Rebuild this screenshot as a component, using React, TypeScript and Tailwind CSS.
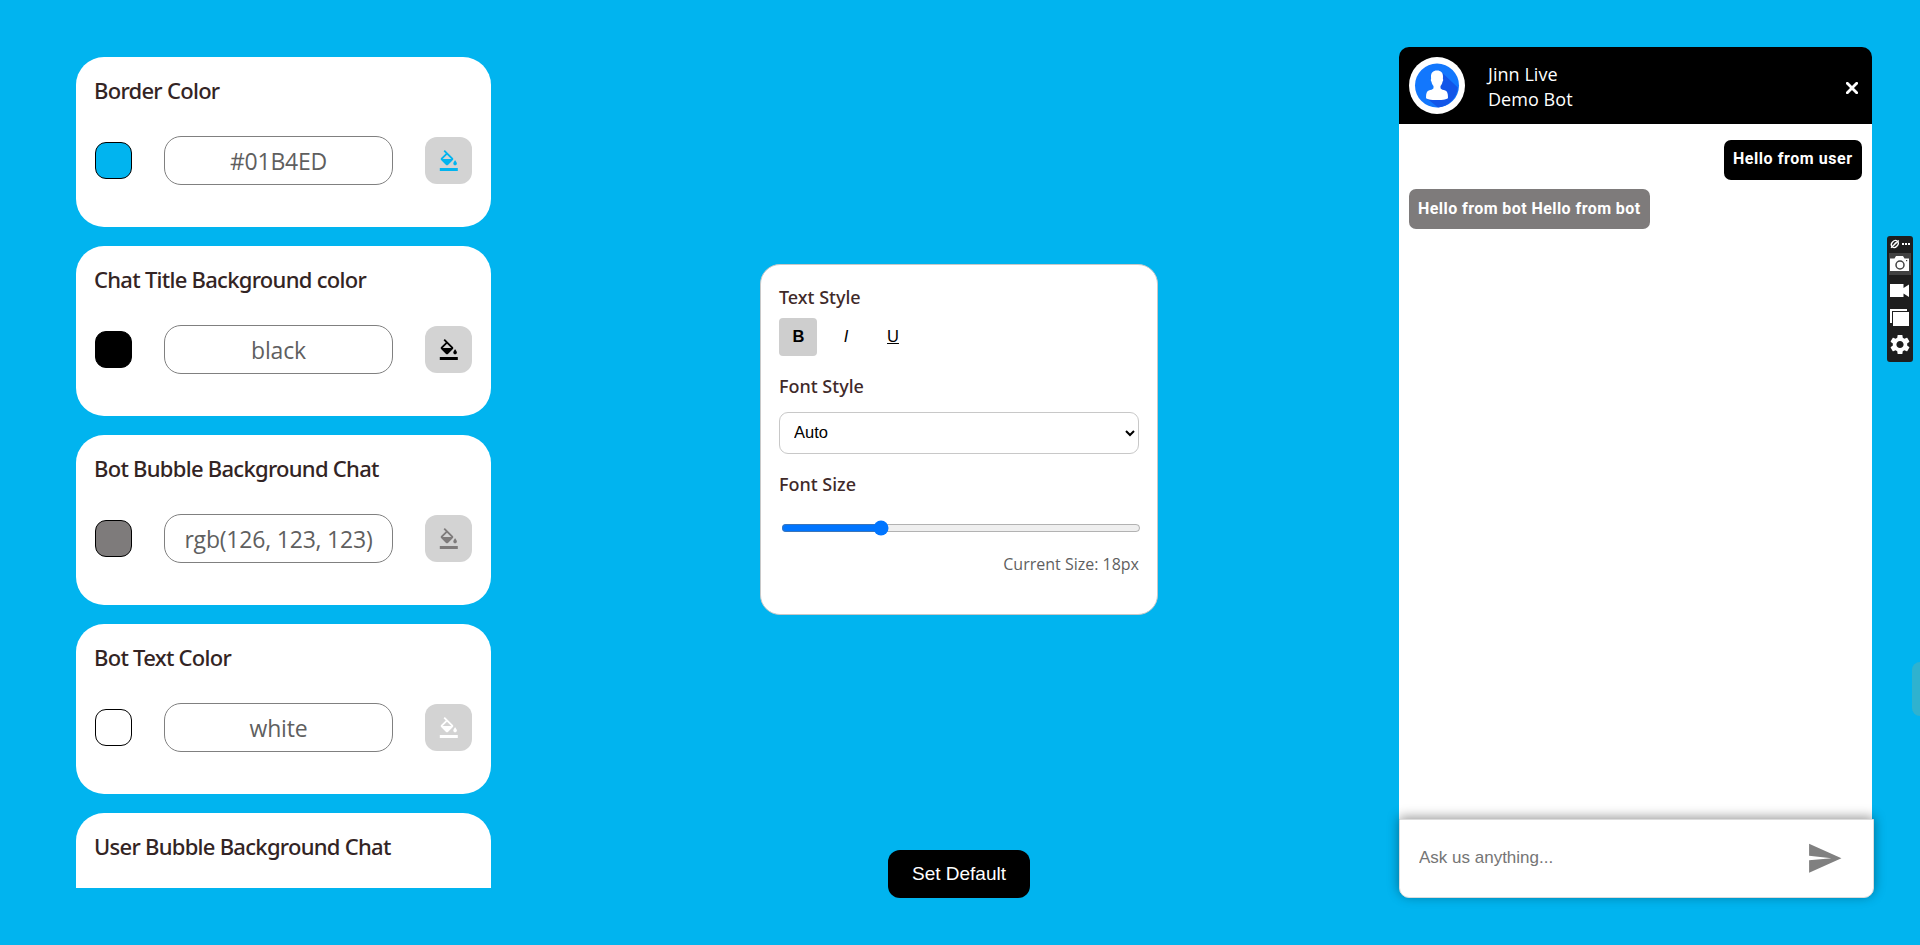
import { useState } from "react";

type ColorSetting = {
  title: string;
  value: string;
  swatch: string;
  icon: string;
};

const settings: ColorSetting[] = [
  { title: "Border Color", value: "#01B4ED", swatch: "bg-[#01b4ef]", icon: "text-[#01b4ef]" },
  { title: "Chat Title Background color", value: "black", swatch: "bg-black", icon: "text-black" },
  { title: "Bot Bubble Background Chat", value: "rgb(126, 123, 123)", swatch: "bg-[#7e7b7b]", icon: "text-[#7e7b7b]" },
  { title: "Bot Text Color", value: "white", swatch: "bg-white", icon: "text-white" },
  { title: "User Bubble Background Chat", value: "black", swatch: "bg-black", icon: "text-black" },
];

function FillIcon() {
  return (
    <svg viewBox="0 0 24 24" className="size-[21.6px]" fill="currentColor">
      <path d="M16.56 8.94L7.62 0 6.21 1.41l2.38 2.38-5.15 5.15c-.59.59-.59 1.54 0 2.12l5.5 5.5c.29.29.68.44 1.06.44s.77-.15 1.06-.44l5.5-5.5c.59-.58.59-1.53 0-2.12zM5.21 10L10 5.21 14.79 10H5.21zM19 11.5s-2 2.17-2 3.5c0 1.1.9 2 2 2s2-.9 2-2c0-1.33-2-3.5-2-3.5zM2 20h20v4H2v-4z" />
    </svg>
  );
}

function ColorCard({ title, value, swatch, icon }: ColorSetting) {
  return (
    <section className="h-[170px] shrink-0 rounded-[28px] bg-white px-[19px] pt-[18px]">
      <h2 className="-ml-px font-['Noto_Sans',sans-serif] text-[22px] leading-[31px] font-medium tracking-[-0.72px] whitespace-nowrap text-[#332424]">
        {title}
      </h2>
      <div className="mt-[30px] flex h-[49px] items-center justify-between">
        <span className={"size-[37px] rounded-[11px] border border-black " + swatch} />
        <input
          readOnly
          value={value}
          className="h-[49px] w-[229px] rounded-[17px] border border-[#808080] bg-white pt-px text-center font-['Open_Sans',sans-serif] text-[23px] tracking-[-0.2px] text-[#5f5f5f] outline-none"
        />
        <button className={"flex size-[47px] items-center justify-center rounded-[12px] bg-[#d3d3d3] " + icon}>
          <FillIcon />
        </button>
      </div>
    </section>
  );
}

function Label({ children }: { children: string }) {
  return (
    <h3 className="font-['Noto_Sans',sans-serif] text-[18px] leading-[28px] font-medium text-[#3f2a2a]">
      {children}
    </h3>
  );
}

function TextCard() {
  const [size, setSize] = useState(18);
  return (
    <section className="h-[351px] w-[398px] rounded-[20px] border border-[#c8c8c8] bg-white px-[18px] pt-[18px]">
      <Label>Text Style</Label>
      <div className="mt-[7px] flex gap-[9px] font-['Liberation_Sans',sans-serif] text-[16.5px] text-black">
        <button className="size-[38px] rounded-[4px] bg-[#cecece] pb-[2px] pl-px font-bold">B</button>
        <button className="size-[38px] rounded-[4px] pb-[2px] pl-[2px] italic">I</button>
        <button className="size-[38px] rounded-[4px] pb-[2px] pl-[2px] underline">U</button>
      </div>
      <div className="mt-[16px]">
        <Label>Font Style</Label>
      </div>
      <select className="mt-[12px] block h-[42px] w-[360px] rounded-[9px] border border-[#c8c8c8] bg-white pb-[2px] pl-[10px] font-['Liberation_Sans',sans-serif] text-[16.5px] text-black">
        <option>Auto</option>
      </select>
      <div className="mt-[16px]">
        <Label>Font Size</Label>
      </div>
      <input
        type="range"
        min={10}
        max={40}
        value={size}
        onChange={(e) => setSize(Number(e.target.value))}
        className="mt-[22px] ml-[2px] block h-4 w-[360px]"
      />
      <p className="mt-[16px] text-right font-['Open_Sans',sans-serif] text-[16px] leading-[24px] text-[#5f5f5f]">
        Current Size: {size}px
      </p>
    </section>
  );
}

function Avatar() {
  return (
    <svg viewBox="0 0 56 57" className="h-[57px] w-[56px]">
      <ellipse cx="28" cy="28.5" rx="28" ry="28.5" fill="#fff" />
      <circle cx="28" cy="28.5" r="22" fill="#1277fd" />
      <path d="M33.500 16L48.800 30.500A22 22 0 0 1 29 50.500L18 41.500 28 30Z" fill="#1255e8" />
      <path
        d="M28 13.500c4 0 6.200 2.400 6 6.300l-.1 2.200c.5.300.4 1.800-.4 2.800-.4 2-1.100 3.300-2 4.300v2.200c.6 1.300 3 1.700 4.700 2.300 2 .7 2.800 3.200 2.800 6.900 0 1.800-4.800 2.600-11 2.600s-11-.8-11-2.600c0-3.700.8-6.200 2.800-6.900 1.700-.6 4.100-1 4.700-2.300v-2.200c-.9-1-1.600-2.300-2-4.300-.8-1-.9-2.500-.4-2.800l-.1-2.200c-.2-3.900 2-6.300 6-6.300z"
        fill="#fff"
      />
    </svg>
  );
}

function ChatWidget() {
  return (
    <section className="flex h-[851px] w-[475px] flex-col">
      <header className="flex h-[77px] w-[473px] shrink-0 items-center rounded-t-[10px] bg-black pr-[14px] pl-[10px]">
        <Avatar />
        <div className="ml-[23px] flex-1 pt-[3px] font-['Open_Sans',sans-serif] text-[18px] leading-[25px] tracking-[0.05px] text-white">
          <p>Jinn Live</p>
          <p>Demo Bot</p>
        </div>
        <svg viewBox="0 0 12 12" className="mt-[5px] size-[12px]" fill="none" stroke="#fff" strokeWidth="2.8" strokeLinecap="round">
          <path d="M1.300 1.300L10.700 10.700M10.700 1.300L1.300 10.700" />
        </svg>
      </header>
      <div className="flex w-[473px] flex-1 flex-col gap-[9px] bg-white px-[10px] pt-[16px] font-['Roboto',sans-serif] text-[16px] leading-[38px] font-bold whitespace-nowrap text-white">
        <p className="h-[40px] w-[138px] self-end rounded-[7px] bg-black pl-[9px] tracking-[0.55px]">Hello from user</p>
        <p className="h-[40px] w-[241px] rounded-[7px] bg-[#7e7b7b] pl-[9px] leading-[40px] tracking-[0.43px]">
          Hello from bot Hello from bot
        </p>
      </div>
      <footer className="relative flex h-[79px] shrink-0 items-center justify-between rounded-b-[10px] border border-[#dcdcdc] bg-white pr-[30px] pl-[19px] shadow-[0_-2px_12px_rgba(0,0,0,0.4)]">
        <input
          placeholder="Ask us anything..."
          className="w-[300px] pb-[2px] font-['Liberation_Sans',sans-serif] text-[17px] outline-none placeholder:text-[#757575]"
        />
        <svg viewBox="0 0 24 24" preserveAspectRatio="none" className="h-[38.500px] w-[37px]" fill="#808080">
          <path d="M2.010 21L23 12 2.010 3 2 10.400l14.500 1.600L2 13.300z" />
        </svg>
      </footer>
    </section>
  );
}

function CaptureToolbar() {
  return (
    <svg viewBox="0 0 26 126" className="absolute top-[236px] left-[1887px] h-[126px] w-[26px]">
      <rect width="26" height="126" rx="3" fill="#1e1e1e" />
      <rect x="2" y="17" width="22" height="22" fill="#424242" />
      <g fill="none" stroke="#fff" strokeWidth="1.300">
        <ellipse cx="7.800" cy="8" rx="3.800" ry="3" transform="rotate(-48 7.800 8)" />
        <path d="M4 11.800L11.800 4.500M6.500 9.500L9 6.500" />
      </g>
      <g fill="#fff">
        <rect x="15" y="7" width="2" height="2" />
        <rect x="18" y="7" width="2" height="2" />
        <rect x="21" y="7" width="2" height="2" />
        <path d="M3 22.500h4.500l1.500-2.500h7l1.500 2.500H22V35H3z" />
        <path d="M3 48h13.500v4l5.500-3.500V61l-5.500-3.500V61H3z" />
        <path d="M3 73h17v2H5v12H3z" />
        <rect x="6" y="76" width="16" height="14" />
      </g>
      <circle cx="13" cy="29" r="4" fill="none" stroke="#424242" strokeWidth="1.500" />
      <rect x="19" y="24" width="1.200" height="1.200" fill="#424242" />
      <path
        transform="translate(1 96.500)"
        fill="#fff"
        d="M19.140 12.940c.04-.3.060-.61.060-.94 0-.32-.02-.64-.07-.94l2.030-1.580c.18-.14.230-.41.120-.61l-1.920-3.320c-.12-.22-.37-.29-.59-.22l-2.390.96c-.5-.38-1.030-.7-1.620-.94l-.36-2.540c-.04-.24-.24-.41-.48-.41h-3.840c-.24 0-.43.17-.47.410l-.36 2.540c-.59.240-1.130.57-1.620.940l-2.390-.96c-.22-.08-.47 0-.59.220L2.740 8.870c-.12.210-.08.470.120.610l2.030 1.580c-.05.3-.09.630-.09.940s.02.640.070.940l-2.030 1.580c-.18.140-.23.410-.12.610l1.920 3.320c.12.220.37.290.59.220l2.390-.96c.5.380 1.030.7 1.620.940l.36 2.540c.05.240.24.410.48.410h3.840c.24 0 .44-.17.470-.41l.36-2.540c.59-.24 1.130-.56 1.620-.94l2.390.96c.22.080.470 0 .59-.22l1.920-3.320c.12-.22.070-.47-.12-.61l-2.010-1.580zM12 15.600c-1.980 0-3.600-1.620-3.600-3.600s1.620-3.600 3.600-3.600 3.600 1.620 3.600 3.600-1.620 3.600-3.600 3.600z"
      />
    </svg>
  );
}

export default function App() {
  return (
    <main className="relative flex h-[945px] w-[1920px] overflow-hidden bg-[#01b4ef]">
      <div className="mt-[57px] ml-[76px] flex h-[831px] w-[415px] flex-col gap-[19px] overflow-hidden">
        {settings.map((s) => (
          <ColorCard key={s.title} {...s} />
        ))}
      </div>
      <div className="ml-[269px] flex h-[898px] w-[398px] flex-col items-center justify-between pt-[264px]">
        <TextCard />
        <button className="h-[48px] w-[142px] rounded-[12px] bg-black pt-px font-['Liberation_Sans',sans-serif] text-[19px] text-white">
          Set Default
        </button>
      </div>
      <div className="mt-[47px] ml-[241px]">
        <ChatWidget />
      </div>
      <CaptureToolbar />
      <div className="absolute top-[662px] right-0 h-[54px] w-[8px] rounded-l-[8px] bg-[#2fb2cf]" />
    </main>
  );
}
